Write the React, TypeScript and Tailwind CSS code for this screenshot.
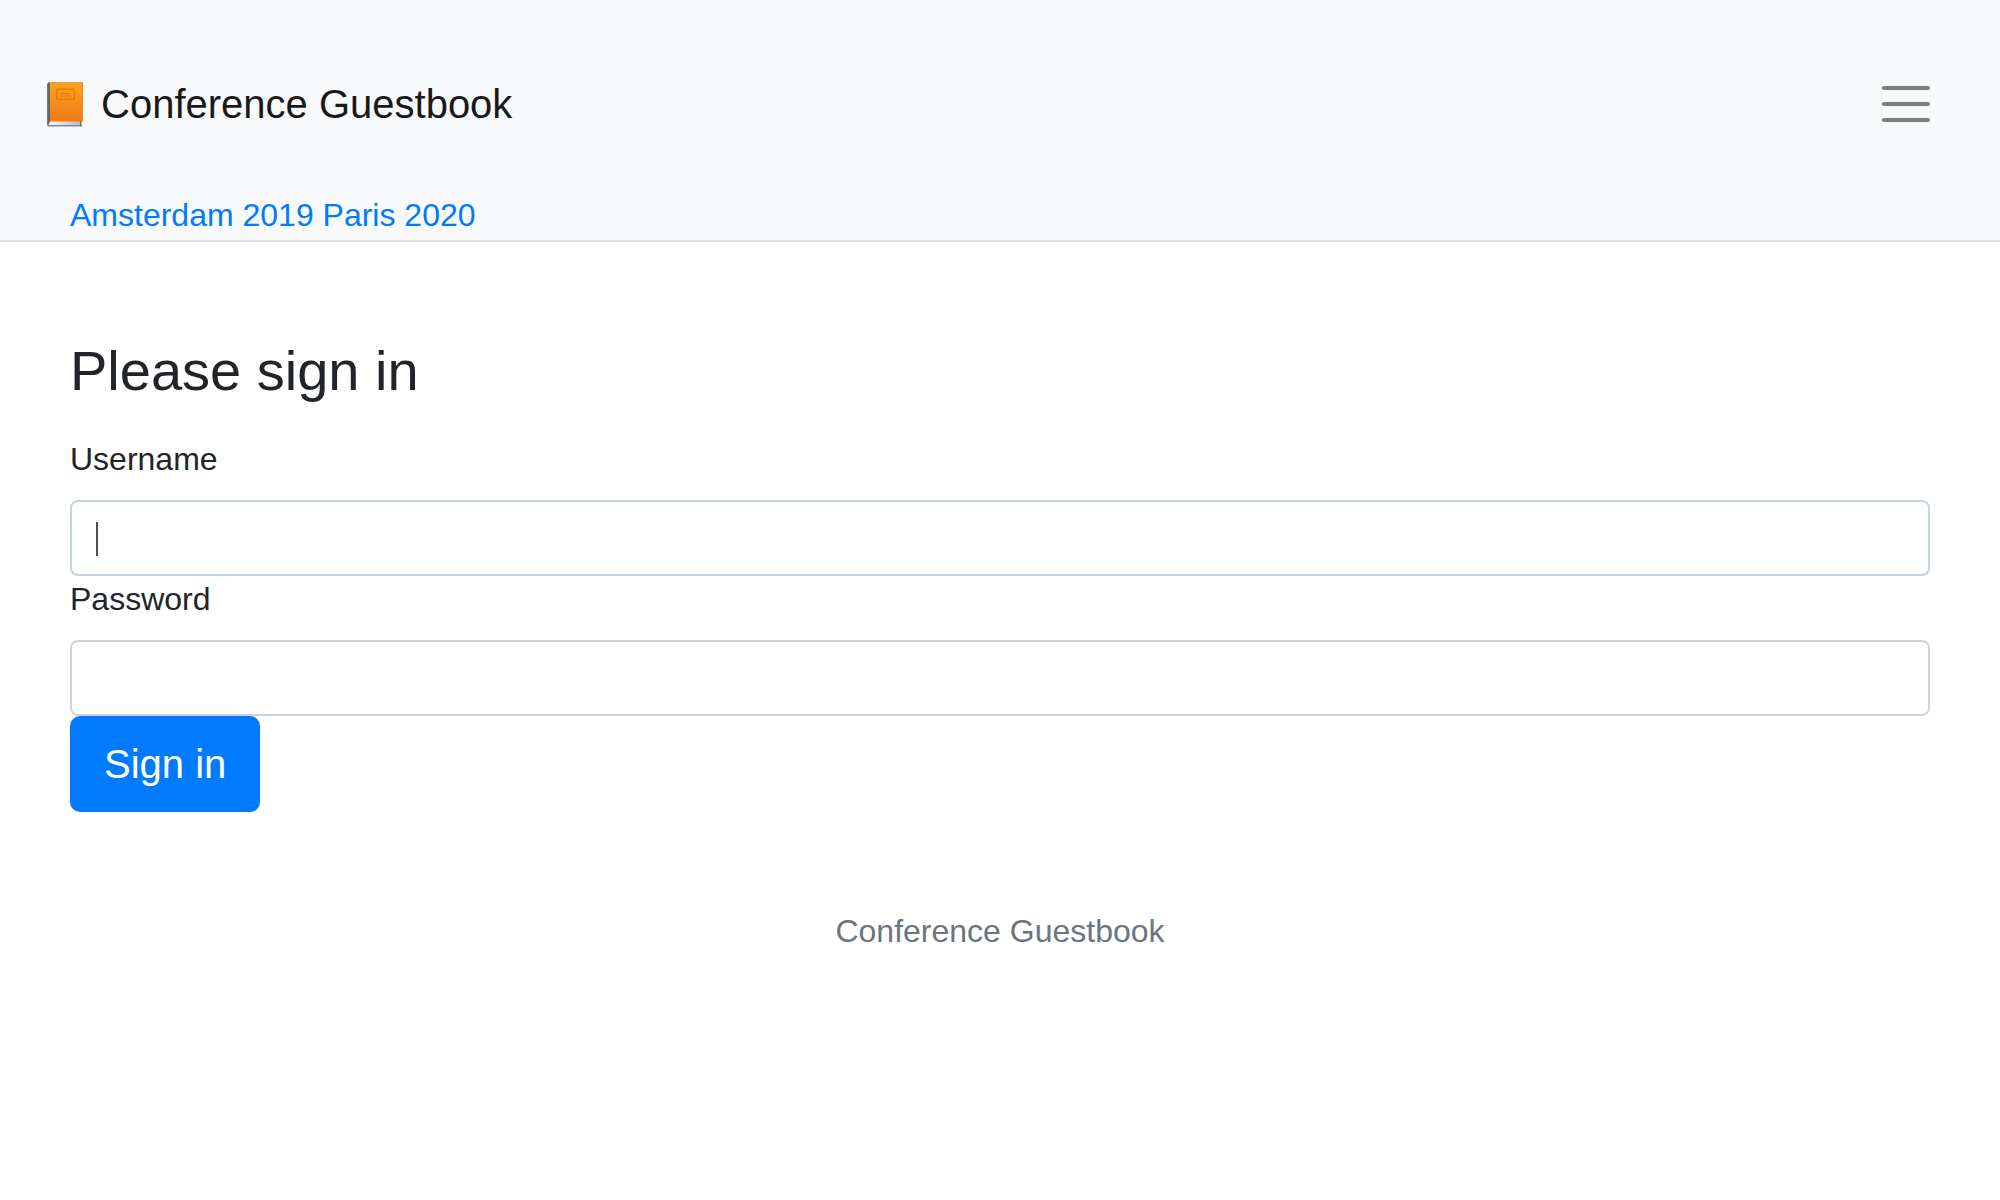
function BookIcon() {
  return (
    <svg viewBox="0 0 36 45" className="h-[45px] w-9 shrink-0" aria-hidden="true">
      <defs>
        <linearGradient id="cover" x1="0" y1="0" x2="0" y2="1">
          <stop offset="0" stopColor="#fca41a" />
          <stop offset="1" stopColor="#ee7a17" />
        </linearGradient>
        <linearGradient id="pages" x1="0" y1="0" x2="1" y2="0">
          <stop offset="0" stopColor="#f5f5f5" />
          <stop offset="1" stopColor="#b9b9b9" />
        </linearGradient>
        <linearGradient id="spine" x1="0" y1="0" x2="1" y2="0">
          <stop offset="0" stopColor="#7b8187" />
          <stop offset="1" stopColor="#464d54" />
        </linearGradient>
      </defs>
      <path d="M0 2L1.5 0.5H5V43H35V44.5H1L0 43Z" fill="#85888b" />
      <rect x="1.5" y="39" width="33" height="4" fill="url(#pages)" />
      <rect x="33" y="39" width="1.3" height="5" fill="#6d6d6d" />
      <path d="M0 2L1.5 0.5H3.2V38.5L1.6 43H0Z" fill="url(#spine)" />
      <rect x="2.8" y="0" width="33.2" height="39.5" fill="url(#cover)" />
      <path d="M2.8 0.5H36" stroke="#dda047" />
      <path d="M35.5 1V39" stroke="#e98f1d" />
      <rect x="9.7" y="7.2" width="17.6" height="10.2" rx="0.6" fill="none" stroke="#e5790f" strokeWidth="1.3" />
      <path d="M15 11.5H22M13.2 14H24" stroke="#e0760f" strokeWidth="1.1" />
    </svg>
  );
}

const labelClass = "mb-[18px] block";
const fieldClass =
  "block h-[76px] w-full rounded-lg border-2 bg-white px-6 text-[32px] text-[#495057] caret-transparent outline-none";

export default function App() {
  return (
    <div className="font-['Liberation_Sans',Arial,sans-serif] text-[32px] leading-[46px] text-[#212529]">
      <header className="border-b-2 border-[#dee2e6] bg-[#f8f9fa]">
        <nav className="flex items-center justify-between pt-[74px] pr-[70px] pb-[58px] pl-[47px]">
          <a href="#home" className="flex items-center gap-[18px] text-[40px] leading-[60px] text-[#191919]">
            <BookIcon />
            Conference Guestbook
          </a>
          <button type="button" aria-label="Toggle navigation" className="flex flex-col gap-3">
            <span className="h-1 w-12 rounded-full bg-[#7c7d7d]" />
            <span className="h-1 w-12 rounded-full bg-[#7c7d7d]" />
            <span className="h-1 w-12 rounded-full bg-[#7c7d7d]" />
          </button>
        </nav>
        <div className="px-[70px] pb-0.5 text-[#007bff]">
          <a href="#amsterdam-2019">Amsterdam 2019</a> <a href="#paris-2020">Paris 2020</a>
        </div>
      </header>
      <main className="px-[70px] pt-[95px]">
        <form onSubmit={(e) => e.preventDefault()}>
          <h1 className="mb-8 text-[56px] leading-[67px]">Please sign in</h1>
          <label htmlFor="username" className={labelClass}>Username</label>
          <div className="relative">
            <input id="username" type="text" className={`${fieldClass} border-[#c5d3e0]`} />
            <span className="pointer-events-none absolute top-[22px] left-[26px] h-[34px] w-0.5 bg-[#495057]" />
          </div>
          <label htmlFor="password" className={labelClass}>Password</label>
          <input id="password" type="password" className={`${fieldClass} border-[#ced4da]`} />
          <button
            type="submit"
            className="block h-24 rounded-[10px] bg-[#007bff] px-[34px] text-[40px] leading-[60px] text-white"
          >
            Sign in
          </button>
        </form>
      </main>
      <footer className="py-24 text-center text-[#6c757d]">Conference Guestbook</footer>
    </div>
  );
}
